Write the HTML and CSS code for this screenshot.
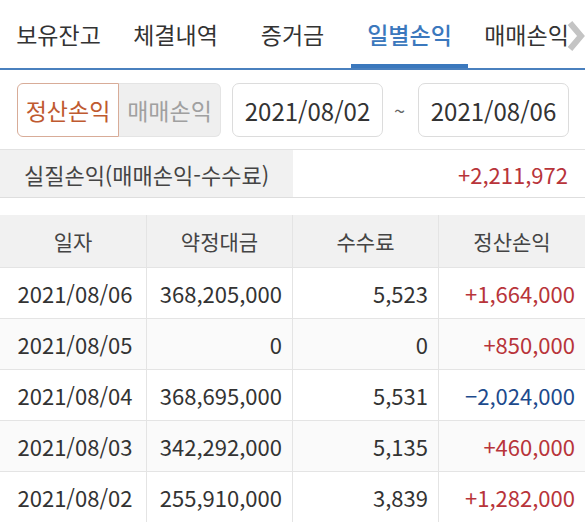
FILE: index.html
```html
<!DOCTYPE html>
<html lang="ko">
<head>
<meta charset="utf-8">
<link rel="stylesheet" href="styles.css">
</head>
<body>
<div class="page">
  <nav class="tabs">
    <div class="tab">보유잔고</div>
    <div class="tab">체결내역</div>
    <div class="tab">증거금</div>
    <div class="tab active">일별손익</div>
    <div class="tab">매매손익</div>
    <svg class="chev" width="20" height="34" viewBox="0 0 20 34"><polyline points="5,4 16,17 5,30" fill="none" stroke="#c4c4c4" stroke-width="6" stroke-linejoin="miter"/></svg>
  </nav>
  <div class="filters">
    <div class="toggle">
      <div class="opt on">정산손익</div>
      <div class="opt off">매매손익</div>
    </div>
    <div class="date">2021/08/02</div>
    <div class="tilde">~</div>
    <div class="date">2021/08/06</div>
  </div>
  <div class="summary">
    <div class="sum-label">실질손익(매매손익-수수료)</div>
    <div class="sum-value up">+2,211,972</div>
  </div>
  <div class="table">
    <div class="row head">
      <div class="c">일자</div><div class="c">약정대금</div><div class="c">수수료</div><div class="c">정산손익</div>
    </div>
    <div class="row">
      <div class="c date-c">2021/08/06</div><div class="c num">368,205,000</div><div class="c num">5,523</div><div class="c num up">+1,664,000</div>
    </div>
    <div class="row alt">
      <div class="c date-c">2021/08/05</div><div class="c num">0</div><div class="c num">0</div><div class="c num up">+850,000</div>
    </div>
    <div class="row">
      <div class="c date-c">2021/08/04</div><div class="c num">368,695,000</div><div class="c num">5,531</div><div class="c num down">−2,024,000</div>
    </div>
    <div class="row alt">
      <div class="c date-c">2021/08/03</div><div class="c num">342,292,000</div><div class="c num">5,135</div><div class="c num up">+460,000</div>
    </div>
    <div class="row">
      <div class="c date-c">2021/08/02</div><div class="c num">255,910,000</div><div class="c num">3,839</div><div class="c num up">+1,282,000</div>
    </div>
  </div>
</div>
</body>
</html>
```
FILE: styles.css
```css
* { box-sizing: border-box; }
html, body { margin: 0; padding: 0; background: #fff; }
body {
  font-family: "Noto Sans CJK KR", "Noto Sans", sans-serif;
  color: #333;
  font-size: 20px;
}
.page { width: 585px; }
.tabs {
  position: relative;
  display: grid;
  grid-template-columns: repeat(5, 1fr);
  height: 70px;
  border-bottom: 2px solid #4a80be;
}
.tab {
  display: flex;
  align-items: center;
  justify-content: center;
  font-size: 23px;
  color: #333;
  padding-bottom: 1px;
}
.tab.active {
  color: #3b78bd;
  font-weight: 500;
  box-shadow: inset 0 -4px 0 #3b78bd;
}
.chev { position: absolute; right: 0; top: 19px; }
.filters {
  display: flex;
  align-items: center;
  padding: 13px 0 0 17px;
  height: 67px;
}
.toggle { display: flex; height: 54px; }
.opt {
  width: 102px;
  display: flex;
  align-items: center;
  justify-content: center;
  font-size: 23px;
}
.opt.on {
  color: #bf5a30;
  border: 1px solid #d8ac98;
  border-radius: 6px 0 0 6px;
  background: #fff;
}
.opt.off {
  color: #a0a0a0;
  background: #efefef;
  border: 1px solid #e4e4e4;
  border-left: none;
  border-radius: 0 6px 6px 0;
}
.date {
  width: 151px;
  height: 54px;
  margin-left: 11px;
  border: 1px solid #dcdcdc;
  border-radius: 7px;
  display: flex;
  align-items: center;
  justify-content: center;
  font-size: 24px;
  color: #333;
}
.tilde { width: 24px; margin-left: 11px; margin-right: -11px; text-align: left; color: #666; font-size: 20px; }
.summary {
  margin-top: 12px;
  display: flex;
  height: 49px;
  border-top: 1px solid #e2e2e2;
  border-bottom: 1px solid #dedede;
}
.sum-label {
  width: 293px;
  background: #f1f1f1;
  display: flex;
  align-items: center;
  justify-content: center;
  font-size: 22px;
  color: #444;
}
.sum-value {
  flex: 1;
  display: flex;
  align-items: center;
  justify-content: flex-end;
  padding-right: 17px;
  font-size: 22px;
}
.up { color: #b8343a; }
.down { color: #1d4a8c; }
.table { margin-top: 17px; border-bottom: 1px solid #e4e4e4; }
.row {
  display: grid;
  grid-template-columns: 146px 146px 146px 147px;
  height: 51px;
  border-top: 1px solid #e4e4e4;
}
.row.head { background: #f1f1f1; border-top: none; height: 52px; }
.row.alt { background: #fafafa; }
.c {
  display: flex;
  align-items: center;
  justify-content: center;
  border-left: 1px solid #e4e4e4;
  font-size: 22px;
  color: #444;
}
.c:first-child { border-left: none; }
.head .c { color: #444; font-size: 21px; }
.date-c { font-size: 22px; color: #333; padding-left: 4px; }
.num {
  justify-content: flex-end;
  padding-right: 10px;
  font-size: 22px;
  color: #333;
}
.num.up { color: #b8343a; }
.num.down { color: #1d4a8c; }
```
